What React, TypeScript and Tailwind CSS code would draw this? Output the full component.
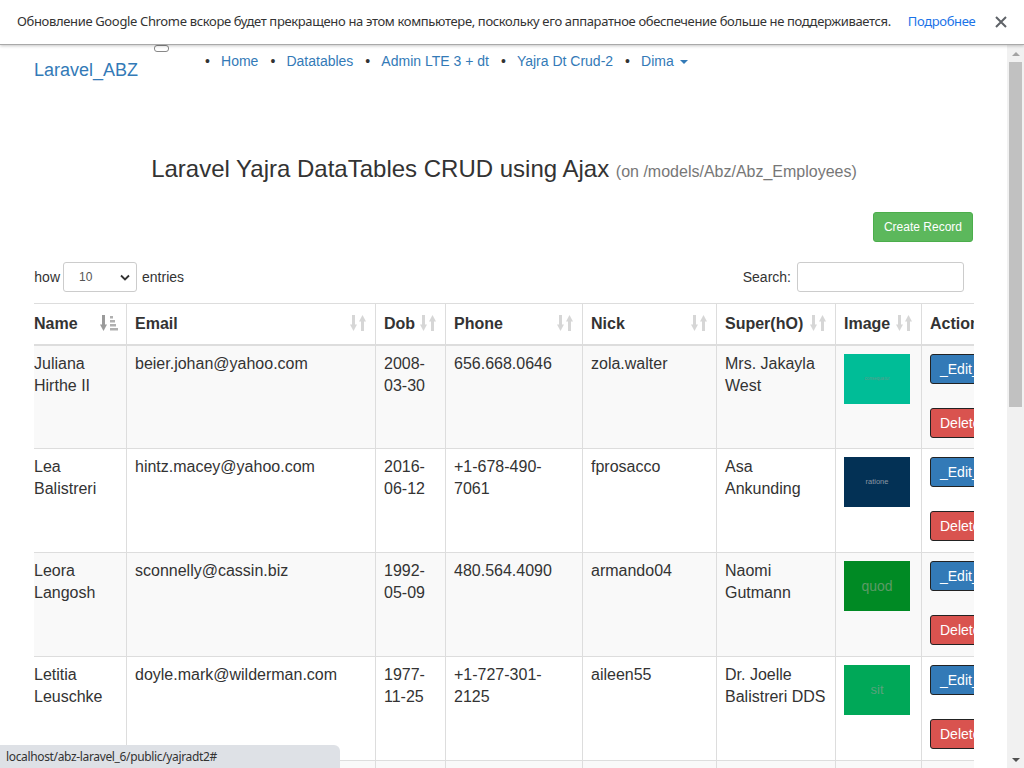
import React from "react";

type Row = {
    name: string;
    email: string;
    dob: string;
    phone: string;
    nick: string;
    sup: string;
    img: { word: string; bg: string; fg: string; size: string };
};

const rows: Row[] = [
    {
        name: "Juliana Hirthe II",
        email: "beier.johan@yahoo.com",
        dob: "2008-03-30",
        phone: "656.668.0646",
        nick: "zola.walter",
        sup: "Mrs. Jakayla West",
        img: { word: "consequatur", bg: "bg-[#00bd97]", fg: "text-[#5f9c8c]", size: "text-[4.5px]" },
    },
    {
        name: "Lea Balistreri",
        email: "hintz.macey@yahoo.com",
        dob: "2016-06-12",
        phone: "+1-678-490-7061",
        nick: "fprosacco",
        sup: "Asa Ankunding",
        img: { word: "ratione", bg: "bg-[#033155]", fg: "text-[#8a96a3]", size: "text-[7.5px]" },
    },
    {
        name: "Leora Langosh",
        email: "sconnelly@cassin.biz",
        dob: "1992-05-09",
        phone: "480.564.4090",
        nick: "armando04",
        sup: "Naomi Gutmann",
        img: { word: "quod", bg: "bg-[#008a24]", fg: "text-[#5c9a66]", size: "text-[14px]" },
    },
    {
        name: "Letitia Leuschke",
        email: "doyle.mark@wilderman.com",
        dob: "1977-11-25",
        phone: "+1-727-301-2125",
        nick: "aileen55",
        sup: "Dr. Joelle Balistreri DDS",
        img: { word: "sit", bg: "bg-[#00a858]", fg: "text-[#5aa27c]", size: "text-[13px]" },
    },
    {
        name: "Lorenz Kuhic",
        email: "rmurray@gmail.com",
        dob: "1985-02-14",
        phone: "364.222.1180",
        nick: "kuhic.l",
        sup: "Mr. Otis Kunde",
        img: { word: "est", bg: "bg-[#7a2a90]", fg: "text-[#a07ab0]", size: "text-[13px]" },
    },
];

// plain sort icon (down + up arrows)
const SortIcon = () => (
    <svg width="16" height="18" viewBox="0 0 16 18" className="absolute right-[9px] top-[10px]">
        <g fill="#d6d6d6">
            <rect x="2" y="1" width="3" height="11" />
            <polygon points="0,10.5 7,10.5 3.5,17" />
            <rect x="11" y="6" width="3" height="11" />
            <polygon points="9,7.5 16,7.5 12.5,1" />
        </g>
    </svg>
);

// active sort icon on Name
const SortAscIcon = () => (
    <svg width="18" height="18" viewBox="0 0 18 18" className="absolute right-[8px] top-[10px]">
        <g fill="#9a9a9a">
            <rect x="2" y="1" width="3" height="11" />
            <polygon points="0,10.5 7,10.5 3.5,17" />
        </g>
        <g fill="#b0b0b0">
            <rect x="10" y="2" width="3" height="2.5" />
            <rect x="10" y="6" width="5" height="2.5" />
            <rect x="10" y="10" width="6" height="2.5" />
            <rect x="10" y="14" width="8" height="2.5" />
        </g>
    </svg>
);

const headers = ["Name", "Email", "Dob", "Phone", "Nick", "Super(hO)", "Image", "Action"];
const colWidths = ["w-[101px]", "w-[249px]", "w-[70px]", "w-[137px]", "w-[134px]", "w-[119px]", "w-[86px]", "w-[100px]"];

const App = () => {
    return (
        <div className="relative h-[768px] w-[1024px] overflow-hidden bg-white">
            {/* Chrome info bar */}
            <div className="relative z-10 flex h-[45px] items-center border-b border-[#a9a9a9] bg-white pl-[17px] pr-[17px] font-['Noto_Sans',sans-serif] text-[13px] text-[#333] shadow-[0_1px_3px_rgba(0,0,0,0.22)]">
                <span className="whitespace-nowrap tracking-[-0.35px]">
                    Обновление Google Chrome вскоре будет прекращено на этом компьютере, поскольку его аппаратное обеспечение больше не поддерживается.
                </span>
                <span className="ml-[17px] whitespace-nowrap tracking-[-0.35px] text-[#1a73e8]">Подробнее</span>
                <svg width="12" height="12" viewBox="0 0 12 12" className="ml-auto">
                    <path d="M1 1 L11 11 M11 1 L1 11" stroke="#5f6368" strokeWidth="2" />
                </svg>
            </div>

            <div className="flex h-[723px]">
                {/* page */}
                <div className="flex-1 overflow-hidden font-['Liberation_Sans',Arial,sans-serif] text-[#333]">
                    {/* navbar */}
                    <div className="flex h-[60px] items-start pl-[34px]">
                        <a href="#" className="mt-[15px] text-[18px] leading-[20px] text-[#337ab7]">
                            Laravel_ABZ
                        </a>
                        <div className="ml-[16px] h-[7px] w-[15px] rounded-[3px] border border-[#888]" />
                        <ul className="ml-[36px] mt-[6px] flex text-[14px] leading-[20px]">
                            {["Home", "Datatables", "Admin LTE 3 + dt", "Yajra Dt Crud-2"].map((t, i) => (
                                <li key={t} className={`flex ${i > 0 ? "ml-[12px]" : ""}`}>
                                    <span className="w-[16px] text-[#333]">•</span>
                                    <a href="#" className="text-[#337ab7]">
                                        {t}
                                    </a>
                                </li>
                            ))}
                            <li className="ml-[12px] flex items-center">
                                <span className="w-[16px] text-[#333]">•</span>
                                <a href="#" className="text-[#337ab7]">
                                    Dima
                                </a>
                                <span className="ml-[6px] mt-[1px] h-0 w-0 border-x-[4px] border-t-[4px] border-x-transparent border-t-[#337ab7]" />
                            </li>
                        </ul>
                    </div>

                    <div className="mx-[34px] w-[940px] overflow-hidden">
                        {/* title */}
                        <h1 className="mt-[49px] text-center text-[24px] leading-[30px] text-[#333]">
                            Laravel Yajra DataTables CRUD using Ajax{" "}
                            <small className="text-[16px] text-[#777]">(on /models/Abz/Abz_Employees)</small>
                        </h1>

                        {/* create button */}
                        <div className="mt-[25px] flex justify-end pr-[1px]">
                            <button
                                type="button"
                                className="h-[30px] rounded-[3px] border border-[#4cae4c] bg-[#5cb85c] px-[10px] text-[12px] text-white"
                            >
                                Create Record
                            </button>
                        </div>

                        <div className="-ml-[9px]">
                            {/* length + search */}
                            <div className="mt-[20px] flex h-[30px] items-center justify-between pr-[10px] text-[14px]">
                                <div className="flex items-center">
                                    <span>Show</span>
                                    <div className="ml-[3px] flex h-[30px] w-[74px] items-center justify-between rounded-[3px] border border-[#ccc] pl-[15px] pr-[6px] text-[12px] text-[#555]">
                                        <span>10</span>
                                        <svg width="10" height="7" viewBox="0 0 10 7">
                                            <path d="M1 1.5 L5 5.5 L9 1.5" stroke="#333" strokeWidth="1.8" fill="none" />
                                        </svg>
                                    </div>
                                    <span className="ml-[5px]">entries</span>
                                </div>
                                <div className="flex items-center">
                                    <span>Search:</span>
                                    <input
                                        type="search"
                                        className="ml-[6px] h-[30px] w-[167px] rounded-[3px] border border-[#ccc] px-[6px] text-[12px]"
                                    />
                                </div>
                            </div>

                            {/* table */}
                            <table className="mt-[11px] w-[996px] table-fixed border-collapse text-[16px] leading-[22px]">
                                <colgroup>
                                    {colWidths.map((w) => (
                                        <col key={w} className={w} />
                                    ))}
                                </colgroup>
                                <thead>
                                    <tr>
                                        {headers.map((h, i) => (
                                            <th
                                                key={h}
                                                className="relative h-[41px] border border-b-2 border-[#ddd] px-[8px] text-left font-bold"
                                            >
                                                {h}
                                                {i === 0 ? <SortAscIcon /> : i < 7 ? <SortIcon /> : null}
                                            </th>
                                        ))}
                                    </tr>
                                </thead>
                                <tbody>
                                    {rows.map((r, i) => (
                                        <tr key={r.email} className={i % 2 === 0 ? "bg-[#f9f9f9]" : "bg-white"}>
                                            <td className="h-[104px] border border-[#ddd] px-[8px] pt-[7px] align-top">{r.name}</td>
                                            <td className="border border-[#ddd] px-[8px] pt-[7px] align-top">{r.email}</td>
                                            <td className="border border-[#ddd] px-[8px] pt-[7px] align-top">{r.dob}</td>
                                            <td className="border border-[#ddd] px-[8px] pt-[7px] align-top">{r.phone}</td>
                                            <td className="border border-[#ddd] px-[8px] pt-[7px] align-top">{r.nick}</td>
                                            <td className="border border-[#ddd] px-[8px] pt-[7px] align-top">{r.sup}</td>
                                            <td className="border border-[#ddd] px-[8px] pt-[8px] align-top">
                                                <div
                                                    className={`flex h-[50px] w-[66px] items-center justify-center font-['Liberation_Sans',Arial,sans-serif] ${r.img.bg} ${r.img.fg} ${r.img.size}`}
                                                >
                                                    {r.img.word}
                                                </div>
                                            </td>
                                            <td className="border border-[#ddd] px-[8px] pt-[8px] align-top">
                                                <div className="flex flex-col items-start gap-[24px]">
                                                    <a
                                                        href="#"
                                                        className="h-[30px] whitespace-nowrap rounded-[3px] border border-[#222] bg-[#337ab7] px-[9px] text-[14px] leading-[28px] text-white"
                                                    >
                                                        _Edit_
                                                    </a>
                                                    <a
                                                        href="#"
                                                        className="h-[30px] whitespace-nowrap rounded-[3px] border border-[#222] bg-[#d9534f] px-[9px] text-[14px] leading-[28px] text-white"
                                                    >
                                                        Delete
                                                    </a>
                                                </div>
                                            </td>
                                        </tr>
                                    ))}
                                </tbody>
                            </table>
                        </div>
                    </div>
                </div>

                {/* scrollbar */}
                <div className="flex w-[17px] flex-col bg-[#f1f1f1]">
                    <div className="flex h-[17px] items-center justify-center">
                        <span className="h-0 w-0 border-x-[4px] border-b-[4px] border-x-transparent border-b-[#a3a3a3]" />
                    </div>
                    <div className="mx-[2px] h-[345px] bg-[#c1c1c1]" />
                    <div className="mt-auto flex h-[17px] items-center justify-center">
                        <span className="h-0 w-0 border-x-[4px] border-t-[4px] border-x-transparent border-t-[#505050]" />
                    </div>
                </div>
            </div>

            {/* status bubble */}
            <div className="absolute bottom-0 left-0 h-[23px] w-[340px] rounded-tr-[6px] bg-[#dee1e6] pl-[6px] font-['Noto_Sans',sans-serif] text-[12px] leading-[23px] tracking-[-0.35px] text-[#333]">
                localhost/abz-laravel_6/public/yajradt2#
            </div>
        </div>
    );
};

export default App;
